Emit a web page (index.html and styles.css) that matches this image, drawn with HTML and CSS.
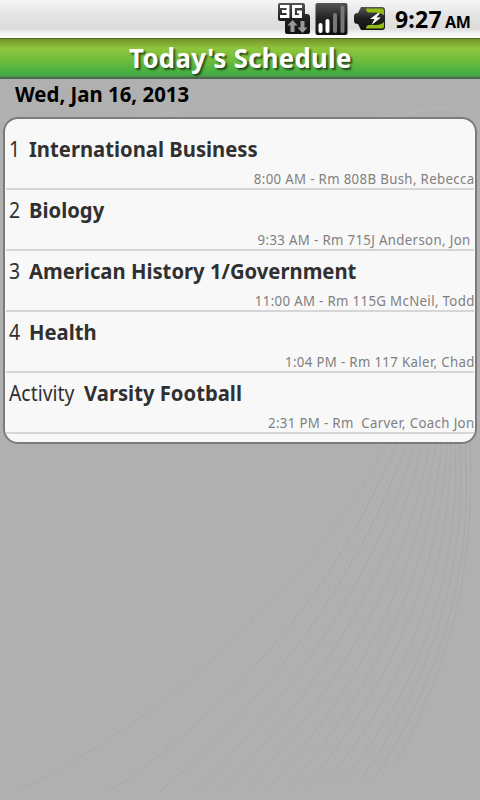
FILE: index.html
```
<!DOCTYPE html>
<html lang="en">
<head>
<meta charset="utf-8">
<title>Today's Schedule</title>
<link rel="stylesheet" href="styles.css">
</head>
<body>
<svg class="backdrop" viewBox="0 0 480 800" aria-hidden="true">
<g class="ray dark">
<path d="M385 443C335 550 190 710 12 793"/>
<path d="M396 443C352 555 260 690 108 792"/>
<path d="M406 443C366 560 280 690 160 791"/>
<path d="M415 443C380 565 300 690 195 791"/>
<path d="M423 443C392 570 320 690 222 790"/>
<path d="M430 443C407 570 345 680 247 789"/>
<path d="M436 443C418 570 365 680 268 789"/>
<path d="M442 443C429 570 380 680 288 789"/>
<path d="M447 443C440 570 395 680 305 788"/>
<path d="M451 443C450 570 410 680 324 785"/>
<path d="M455 443C460 570 425 680 342 783"/>
<path d="M460 443C467 565 435 675 359 782"/>
<path d="M465 443C473 565 447 665 375 778"/>
<path d="M470 443C475 560 455 660 393 767"/>
</g>
<g class="ray light">
<path d="M384 443C334 550 189 709 12 792"/>
<path d="M394 443C350 555 258 690 108 790"/>
<path d="M404 443C364 560 278 690 160 789"/>
<path d="M140 117Q200 106 270 111M390 117Q430 107 462 109M380 114Q420 107 450 107"/>
</g>
</svg>
<header class="status">
<svg class="net" width="34" height="35" viewBox="0 0 34 35">
<defs><linearGradient id="k" x2="0" y2="1"><stop stop-color="#555"/><stop offset=".5" stop-color="#202020"/><stop offset="1" stop-color="#111"/></linearGradient></defs>
<path d="M3 3H26Q28 3 28 5V14H30Q33 14 33 17V32Q33 34 31 34H10Q8 34 8 32V21H3Q1 21 1 19V5Q1 3 3 3Z" fill="url(#k)"/>
<path d="M3 6.500H11V16.500H3M5 11.500H11M25 6.500H16.500V16.500H23.500V12H20" fill="none" stroke="#fff" stroke-width="2.800"/>
<path d="M15.500 20L20.500 25.500H17.500V32H13.500V25.500H10.500ZM25.500 33L30.500 27.500H27.500V21H23.500V27.500H20.500Z" fill="#999"/>
</svg>
<svg class="bars" width="33" height="33" viewBox="0 0 33 33">
<rect x=".5" width="32" height="32" rx="2" fill="url(#k)"/>
<g stroke-width="4" stroke-linecap="round"><path d="M5.500 22V28M12.500 18V28" stroke="#fff"/><path d="M20 12V28M27.500 4.500V28" stroke="#777"/></g>
</svg>
<svg class="battery" width="33" height="25" viewBox="0 0 33 25">
<path d="M8 1H29Q32 1 32 4V21Q32 24 29 24H8L5 18Q1 18 1 15V10Q1 7 5 7Z" fill="url(#k)"/>
<path d="M13 2.500H29Q31 2.500 31 5V9Q28 6.500 23 6.500H15.500Q13 6 13 2.500ZM13 22.500H29Q31 22.500 31 20V16Q28 19 23 19H15.500Q13 19.500 13 22.500Z" fill="#93bd12"/>
<path d="M25 7L17 13H21.500L18.500 19L28 11.500H23.500L27 7Z" fill="#fff"/>
</svg>
<div class="clock"><span class="time">9:27</span><span class="ampm">AM</span></div>
</header>
<h1 class="titlebar"><span>Today's Schedule</span></h1>
<h2 class="date"><span>Wed, Jan 16, 2013</span></h2>
<ul class="schedule">
<li><div class="course"><span class="period">1</span><b>International Business</b></div><p><span>8:00 AM - Rm 808B Bush, Rebecca</span></p></li>
<li><div class="course"><span class="period">2</span><b>Biology</b></div><p><span>9:33 AM - Rm 715J Anderson, Jon </span></p></li>
<li><div class="course"><span class="period">3</span><b>American History 1/Government</b></div><p><span>11:00 AM - Rm 115G McNeil, Todd</span></p></li>
<li><div class="course"><span class="period">4</span><b>Health</b></div><p><span>1:04 PM - Rm 117 Kaler, Chad</span></p></li>
<li><div class="course"><span class="period wide">Activity</span><b>Varsity Football</b></div><p><span>2:31 PM - Rm  Carver, Coach Jon</span></p></li>
</ul>
</body>
</html>
```
FILE: styles.css
```
* { box-sizing: border-box; }
body { margin: 0; height: 800px; overflow: hidden; background: #b0b0b0; font-family: "Noto Sans", "Open Sans", sans-serif; color: #303030; position: relative; }
.backdrop { position: absolute; inset: 0; width: 480px; height: 800px; z-index: -1; }
.ray { fill: none; stroke-width: 1; }
.dark { stroke: #a8a8a8; stroke-dasharray: 9 1; }
.light { stroke: #b7b7b7; stroke-dasharray: 5 4; }
.status { height: 38px; display: flex; align-items: flex-start; padding-left: 277px; background: linear-gradient(#f6f6f6, #e2e2e2 45%, #dcdcdc 75%, #f6f6f6 90%, #fff); }
.net { flex: none; }
.bars { flex: none; margin: 3px 0 0 4px; }
.battery { flex: none; margin: 6px 0 0 5px; }
.clock { margin-left: 9px; color: #000; font-weight: 700; white-space: nowrap; line-height: 38px; display: flex; align-items: baseline; }
.time { font-size: 23px; letter-spacing: 0.2px; width: 50px; }
.ampm { font-size: 16px; letter-spacing: -0.3px; }
.titlebar { margin: 0; height: 41px; border-top: 1px solid #4c6a20; border-bottom: 2px solid #4a6a4a; background: linear-gradient(#75942b, #8fc53c 25%, #6abc3c 60%, #3fae43 92%, #558f55); text-align: center; color: #fff; font-size: 26px; line-height: 39px; text-shadow: 2px 2px 2px rgba(0,0,0,.6); white-space: nowrap; }
.titlebar span, .date span, .course b, .period, .schedule p span { display: inline-block; transform: scaleX(.92); transform-origin: left; }
.titlebar span { transform: scaleX(.99); transform-origin: center; letter-spacing: .3px; }
.date { margin: 0; height: 38px; padding-left: 15px; color: #000; font-size: 22px; line-height: 29px; white-space: nowrap; }
.date span { transform: scaleX(.927); }
.schedule { list-style: none; margin: 0 3px; width: 474px; height: 327px; padding: 10px 1px 8px; border: 2px solid #7c7c7c; border-radius: 15px; background: #f8f8f8; }
.schedule li { height: 61px; border-bottom: 2px solid #d6d6d6; }
.course { display: flex; padding-left: 3px; font-size: 22px; line-height: 38px; height: 40px; white-space: nowrap; }
.period { width: 20px; font-weight: 400; transform: scaleX(.88); }
.period.wide { width: 75px; }
.schedule p { margin: 0; height: 19px; line-height: 19px; font-size: 14px; color: #808080; text-align: right; white-space: pre; }
.schedule p span { transform: scaleX(.945); transform-origin: right; letter-spacing: .37px; margin-right: -.3px; }
```
